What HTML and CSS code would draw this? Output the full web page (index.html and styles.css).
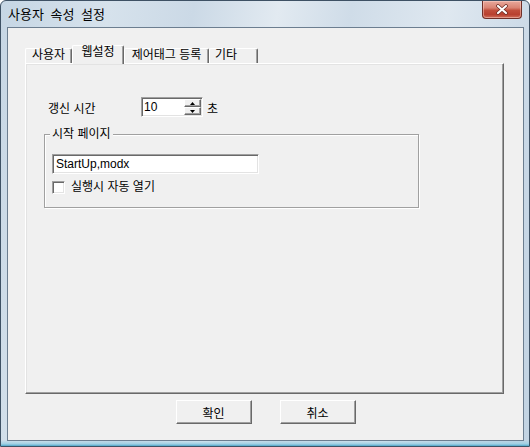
FILE: index.html
```html
<!DOCTYPE html>
<html lang="ko">
<head>
<meta charset="utf-8">
<title>사용자 속성 설정</title>
<link rel="stylesheet" href="styles.css">
</head>
<body>
<div class="window">
  <div class="titlebar">
    <span class="title">사용자 속성 설정</span>
    <div class="close">
      <svg width="14" height="11" viewBox="0 0 14 11">
        <path d="M3 2 L11 9 M11 2 L3 9" stroke="#6a2a22" stroke-width="3.6" stroke-linecap="round" fill="none"/>
        <path d="M3 2 L11 9 M11 2 L3 9" stroke="#ffffff" stroke-width="2.2" stroke-linecap="round" fill="none"/>
      </svg>
    </div>
  </div>
  <div class="client">
    <div class="tabs">
      <div class="tab t1">사용자</div>
      <div class="tab sel">웹설정</div>
      <div class="tab t3">제어태그 등록</div>
      <div class="tab t4">기타</div>
    </div>
    <div class="panel">
      <div class="refresh">
        <span class="lbl">갱신 시간</span>
        <div class="spin">
          <span class="spinval">10</span>
          <div class="spinbtns">
            <div class="sbtn"><svg width="5" height="3" viewBox="0 0 5 3"><path d="M2.5 0 L5 3 L0 3 Z" fill="#000"/></svg></div>
            <div class="sbtn"><svg width="5" height="3" viewBox="0 0 5 3"><path d="M0 0 L5 0 L2.5 3 Z" fill="#000"/></svg></div>
          </div>
        </div>
        <span class="unit">초</span>
      </div>
      <div class="group">
        <div class="legend">시작 페이지</div>
        <div class="textbox">StartUp,modx</div>
        <div class="checkrow">
          <span class="checkbox"></span>
          <span class="checklbl">실행시 자동 열기</span>
        </div>
      </div>
    </div>
    <div class="buttons">
      <div class="btn">확인</div>
      <div class="btn">취소</div>
    </div>
  </div>
</div>
</body>
</html>
```
FILE: styles.css
```css
* { box-sizing: border-box; }
html, body { margin: 0; padding: 0; }
body {
  width: 530px;
  height: 447px;
  overflow: hidden;
  background: #ffffff;
  font-family: "Liberation Sans", "Noto Sans CJK KR", sans-serif;
  font-size: 12px;
  color: #000;
}
.window {
  width: 530px;
  height: 447px;
  border: 1px solid #3e5164;
  border-radius: 6px 6px 0 0;
  padding: 0 5px 5px 6px;
  display: flex;
  flex-direction: column;
  background:
    linear-gradient(to top, #4fa6c8 0, #9fd0e4 2px, rgba(220,235,243,0) 6px),
    linear-gradient(100deg, #c6d6e4 0%, #d6e2ec 18%, #cbd9e6 32%, #e2eaf1 46%, #cfdce8 58%, #dfe8f0 74%, #c9d8e6 90%, #c2d3e2 100%);
}
.titlebar {
  height: 26px;
  display: flex;
  align-items: flex-start;
  justify-content: space-between;
  padding-left: 1px;
}
.title {
  padding-top: 7px;
  line-height: 14px;
  font-size: 13px;
  word-spacing: 3px;
  color: #000;
}
.close {
  width: 40px;
  height: 18px;
  margin-right: 2px;
  border: 1px solid #6f2f28;
  border-top: none;
  border-radius: 0 0 4px 4px;
  background: linear-gradient(to bottom, #e8a99c 0%, #d98373 40%, #c14e3b 55%, #b8402f 80%, #d2705c 100%);
  box-shadow: inset 0 0 0 1px rgba(255,220,210,0.45);
  display: flex;
  align-items: center;
  justify-content: center;
}
.close svg { display: block; }
.client {
  flex: 1;
  border: 1px solid #6c7e90;
  background: #f0f0f0;
  padding: 17px 19px 0 17px;
  display: flex;
  flex-direction: column;
}
.tabs {
  height: 18px;
  display: flex;
  align-items: flex-end;
}
.tab {
  height: 15px;
  border-top: 1px solid #ffffff;
  border-left: 1px solid #ffffff;
  border-right: 1px solid #696969;
  box-shadow: inset -1px 0 #a0a0a0;
  border-radius: 2px 2px 0 0;
  background: #f0f0f0;
  line-height: 13px;
  text-align: center;
  white-space: nowrap;
}
.t1 { width: 47px; }
.sel {
  width: 52px;
  height: 19px;
  margin-bottom: -1px;
  position: relative;
  z-index: 1;
  line-height: 13px;
}
.t3 { width: 85px; }
.t4 { width: 49px; text-align: left; padding-left: 5px; }
.panel {
  height: 331px;
  border: 1px solid;
  border-color: #ffffff #696969 #696969 #ffffff;
  box-shadow: inset -1px -1px #a0a0a0, inset 1px 1px #e3e3e3;
  background: #f0f0f0;
  padding: 33px 0 0 18px;
}
.refresh {
  height: 20px;
  display: flex;
  align-items: center;
}
.lbl {
  width: 97px;
  padding-left: 4px;
}
.spin {
  width: 62px;
  height: 20px;
  border: 1px solid;
  border-color: #a0a0a0 #ffffff #ffffff #a0a0a0;
  box-shadow: inset 1px 1px #696969, inset -1px -1px #e3e3e3;
  background: #ffffff;
  display: flex;
  align-items: center;
  justify-content: space-between;
  padding: 1px 1px 1px 2px;
}
.spinval { line-height: 14px; }
.spinbtns {
  width: 17px;
  height: 16px;
  display: flex;
  flex-direction: column;
}
.sbtn {
  flex: 1;
  border: 1px solid;
  border-color: #ffffff #696969 #696969 #ffffff;
  box-shadow: inset -1px -1px #a0a0a0;
  background: #f0f0f0;
  display: flex;
  align-items: center;
  justify-content: center;
}
.sbtn svg { display: block; }
.unit { margin-left: 4px; }
.group {
  width: 375px;
  height: 74px;
  margin-top: 17px;
  border: 1px solid #a0a0a0;
  box-shadow: inset 1px 1px #ffffff, 1px 1px 0 #ffffff;
  padding-left: 7px;
}
.legend {
  width: fit-content;
  margin: -8px 0 0 -2px;
  padding: 0 2px;
  background: #f0f0f0;
  line-height: 14px;
}
.textbox {
  width: 207px;
  height: 20px;
  margin-top: 13px;
  border: 1px solid;
  border-color: #a0a0a0 #ffffff #ffffff #a0a0a0;
  box-shadow: inset 1px 1px #696969, inset -1px -1px #e3e3e3;
  background: #ffffff;
  padding-left: 3px;
  line-height: 18px;
}
.checkrow {
  margin-top: 7px;
  height: 13px;
  display: flex;
  align-items: center;
}
.checkbox {
  width: 13px;
  height: 13px;
  border: 1px solid;
  border-color: #a0a0a0 #ffffff #ffffff #a0a0a0;
  box-shadow: inset 1px 1px #696969, inset -1px -1px #e3e3e3;
  background: #ffffff;
}
.checklbl { margin-left: 6px; line-height: 13px; }
.buttons {
  margin-top: 6px;
  display: flex;
  justify-content: center;
  gap: 28px;
  padding-left: 2px;
}
.btn {
  width: 76px;
  height: 24px;
  border: 1px solid;
  border-color: #ffffff #696969 #696969 #ffffff;
  box-shadow: inset -1px -1px #a0a0a0;
  background: #f0f0f0;
  display: flex;
  align-items: center;
  justify-content: center;
}
```
